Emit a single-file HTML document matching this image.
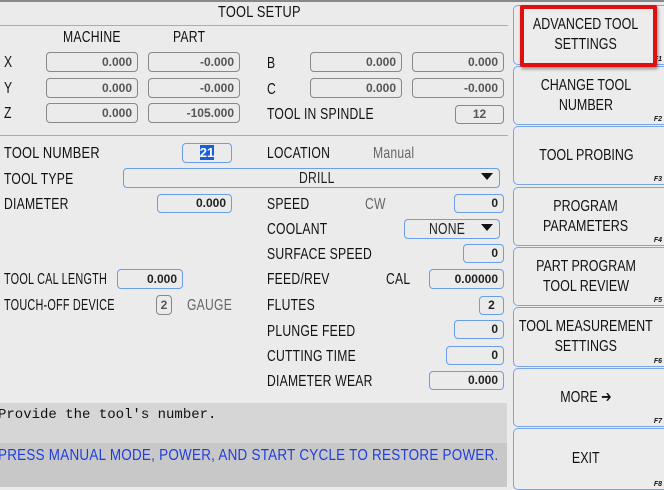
<!DOCTYPE html>
<html><head><style>
body{margin:0;width:664px;height:487px;background:#ebebeb;position:relative;overflow:hidden;font-family:"Liberation Sans",sans-serif;color:#111}
.l{position:absolute;font-size:16px;line-height:16px;white-space:nowrap;transform:scaleX(.76);transform-origin:0 0;letter-spacing:.3px}
.m{position:absolute;font:14px/16px "Liberation Mono",monospace;white-space:nowrap}
.g{color:#666}
.b{position:absolute;box-sizing:border-box;border:1px solid #6a9ee8;border-radius:4px;font:bold 12px "Liberation Sans",sans-serif;text-align:right;padding-right:5px;color:#222}
.k{border-color:#888;color:#555}
.btn{position:absolute;left:513px;width:160px;box-sizing:border-box;border:1px solid #7aa6e6;border-radius:5px;background:#ececec;display:flex;align-items:center;justify-content:center;text-align:center;padding-right:14px}
.btn span{display:inline-block;font-size:16px;line-height:20px;transform:scaleX(.78);white-space:nowrap}
.btn i{position:absolute;right:10px;bottom:1px;font:italic bold 7px "Liberation Sans",sans-serif}
.dd{position:absolute;right:6px;top:4px;width:0;height:0;border-left:6px solid transparent;border-right:6px solid transparent;border-top:7px solid #111}
</style></head><body>
<div style="position:absolute;left:0;top:0;width:664px;height:2px;background:#888"></div>
<div class="l" style="left:218px;top:5px;transform:scaleX(.8)">TOOL SETUP</div>
<div style="position:absolute;left:0;top:25px;width:508px;height:109px;border-top:1px solid #7ab8ee;border-bottom:1px solid #7ab8ee"></div>
<div class="l" style="left:63px;top:30px">MACHINE</div>
<div class="l" style="left:173px;top:30px">PART</div>
<div class="l" style="left:4px;top:55px">X</div>
<div class="l" style="left:4px;top:81px">Y</div>
<div class="l" style="left:4px;top:106px">Z</div>
<div class="b k" style="left:46px;top:52px;width:92px;height:20px;line-height:18px">0.000</div>
<div class="b k" style="left:148px;top:52px;width:92px;height:20px;line-height:18px">-0.000</div>
<div class="b k" style="left:46px;top:78px;width:92px;height:20px;line-height:18px">0.000</div>
<div class="b k" style="left:148px;top:78px;width:92px;height:20px;line-height:18px">-0.000</div>
<div class="b k" style="left:46px;top:103px;width:92px;height:20px;line-height:18px">0.000</div>
<div class="b k" style="left:148px;top:103px;width:92px;height:20px;line-height:18px">-105.000</div>
<div class="l" style="left:267px;top:56px">B</div>
<div class="l" style="left:267px;top:82px">C</div>
<div class="l" style="left:267px;top:107px">TOOL IN SPINDLE</div>
<div class="b k" style="left:310px;top:52px;width:92px;height:20px;line-height:18px">0.000</div>
<div class="b k" style="left:412px;top:52px;width:92px;height:20px;line-height:18px">0.000</div>
<div class="b k" style="left:310px;top:78px;width:92px;height:20px;line-height:18px">0.000</div>
<div class="b k" style="left:412px;top:78px;width:92px;height:20px;line-height:18px">-0.000</div>
<div class="b k" style="left:455px;top:105px;width:49px;height:19px;line-height:17px;text-align:center;padding:0">12</div>

<div class="l" style="left:4px;top:146px;transform:scaleX(.8)">TOOL NUMBER</div>
<div class="b" style="left:182px;top:143px;width:50px;height:20px;line-height:18px;text-align:center;padding:0;font-size:13px"><span style="background:#1a5fd8;color:#fff">21</span></div>
<div class="l" style="left:267px;top:146px">LOCATION</div>
<div class="l g" style="left:373px;top:146px">Manual</div>
<div class="l" style="left:4px;top:172px">TOOL TYPE</div>
<div class="b" style="left:123px;top:168px;width:377px;height:20px;padding:0"><span class="l" style="left:175px;top:2px;font-weight:normal">DRILL</span><span class="dd"></span></div>
<div class="l" style="left:4px;top:197px">DIAMETER</div>
<div class="b" style="left:157px;top:194px;width:75px;height:19px;line-height:17px">0.000</div>
<div class="l" style="left:267px;top:197px">SPEED</div>
<div class="l g" style="left:365px;top:197px">CW</div>
<div class="b" style="left:454px;top:194px;width:50px;height:19px;line-height:17px">0</div>
<div class="l" style="left:267px;top:222px">COOLANT</div>
<div class="b" style="left:404px;top:219px;width:96px;height:20px;padding:0"><span class="l" style="left:24px;top:2px;font-weight:normal">NONE</span><span class="dd"></span></div>
<div class="l" style="left:267px;top:247px">SURFACE SPEED</div>
<div class="b" style="left:463px;top:244px;width:41px;height:19px;line-height:17px">0</div>
<div class="l" style="left:4px;top:272px;transform:scaleX(.68)">TOOL CAL LENGTH</div>
<div class="b" style="left:117px;top:269px;width:66px;height:20px;line-height:18px">0.000</div>
<div class="l" style="left:267px;top:272px">FEED/REV</div>
<div class="l" style="left:386px;top:272px">CAL</div>
<div class="b" style="left:429px;top:269px;width:75px;height:20px;line-height:18px">0.00000</div>
<div class="l" style="left:4px;top:298px;transform:scaleX(.68)">TOUCH-OFF DEVICE</div>
<div class="b k" style="left:156px;top:295px;width:16px;height:20px;line-height:18px;text-align:center;padding:0">2</div>
<div class="l g" style="left:187px;top:298px">GAUGE</div>
<div class="l" style="left:267px;top:298px">FLUTES</div>
<div class="b" style="left:479px;top:296px;width:25px;height:19px;line-height:17px;text-align:center;padding:0">2</div>
<div class="l" style="left:267px;top:324px">PLUNGE FEED</div>
<div class="b" style="left:454px;top:320px;width:50px;height:19px;line-height:17px">0</div>
<div class="l" style="left:267px;top:349px">CUTTING TIME</div>
<div class="b" style="left:446px;top:346px;width:58px;height:19px;line-height:17px">0</div>
<div class="l" style="left:267px;top:374px">DIAMETER WEAR</div>
<div class="b" style="left:429px;top:371px;width:75px;height:19px;line-height:17px">0.000</div>

<div style="position:absolute;left:0;top:403px;width:507px;height:40px;background:#d6d6d6"></div>
<div style="position:absolute;left:0;top:443px;width:507px;height:44px;background:#c8c8c8"></div>
<div class="m" style="left:-2px;top:407px">Provide the tool's number.</div>
<div class="l" style="left:-2px;top:448px;color:#1e3de0;transform:scaleX(.84)">PRESS MANUAL MODE, POWER, AND START CYCLE TO RESTORE POWER.</div>

<div class="btn" style="top:5px;height:60px"><span>ADVANCED TOOL<br>SETTINGS</span><i>F1</i></div>
<div class="btn" style="top:66px;height:59px"><span>CHANGE TOOL<br>NUMBER</span><i>F2</i></div>
<div class="btn" style="top:126px;height:59px"><span>TOOL PROBING</span><i>F3</i></div>
<div class="btn" style="top:187px;height:59px"><span>PROGRAM<br>PARAMETERS</span><i>F4</i></div>
<div class="btn" style="top:247px;height:59px"><span>PART PROGRAM<br>TOOL REVIEW</span><i>F5</i></div>
<div class="btn" style="top:307px;height:60px"><span>TOOL MEASUREMENT<br>SETTINGS</span><i>F6</i></div>
<div class="btn" style="top:368px;height:59px"><span>MORE ➔</span><i>F7</i></div>
<div class="btn" style="top:428px;height:62px"><span>EXIT</span><i>F8</i></div>
<div style="position:absolute;left:520px;top:5px;width:137px;height:62px;box-sizing:border-box;border:4px solid #e01010;border-radius:2px;box-shadow:1px 2px 3px rgba(0,0,0,.4)"></div>
</body></html>
